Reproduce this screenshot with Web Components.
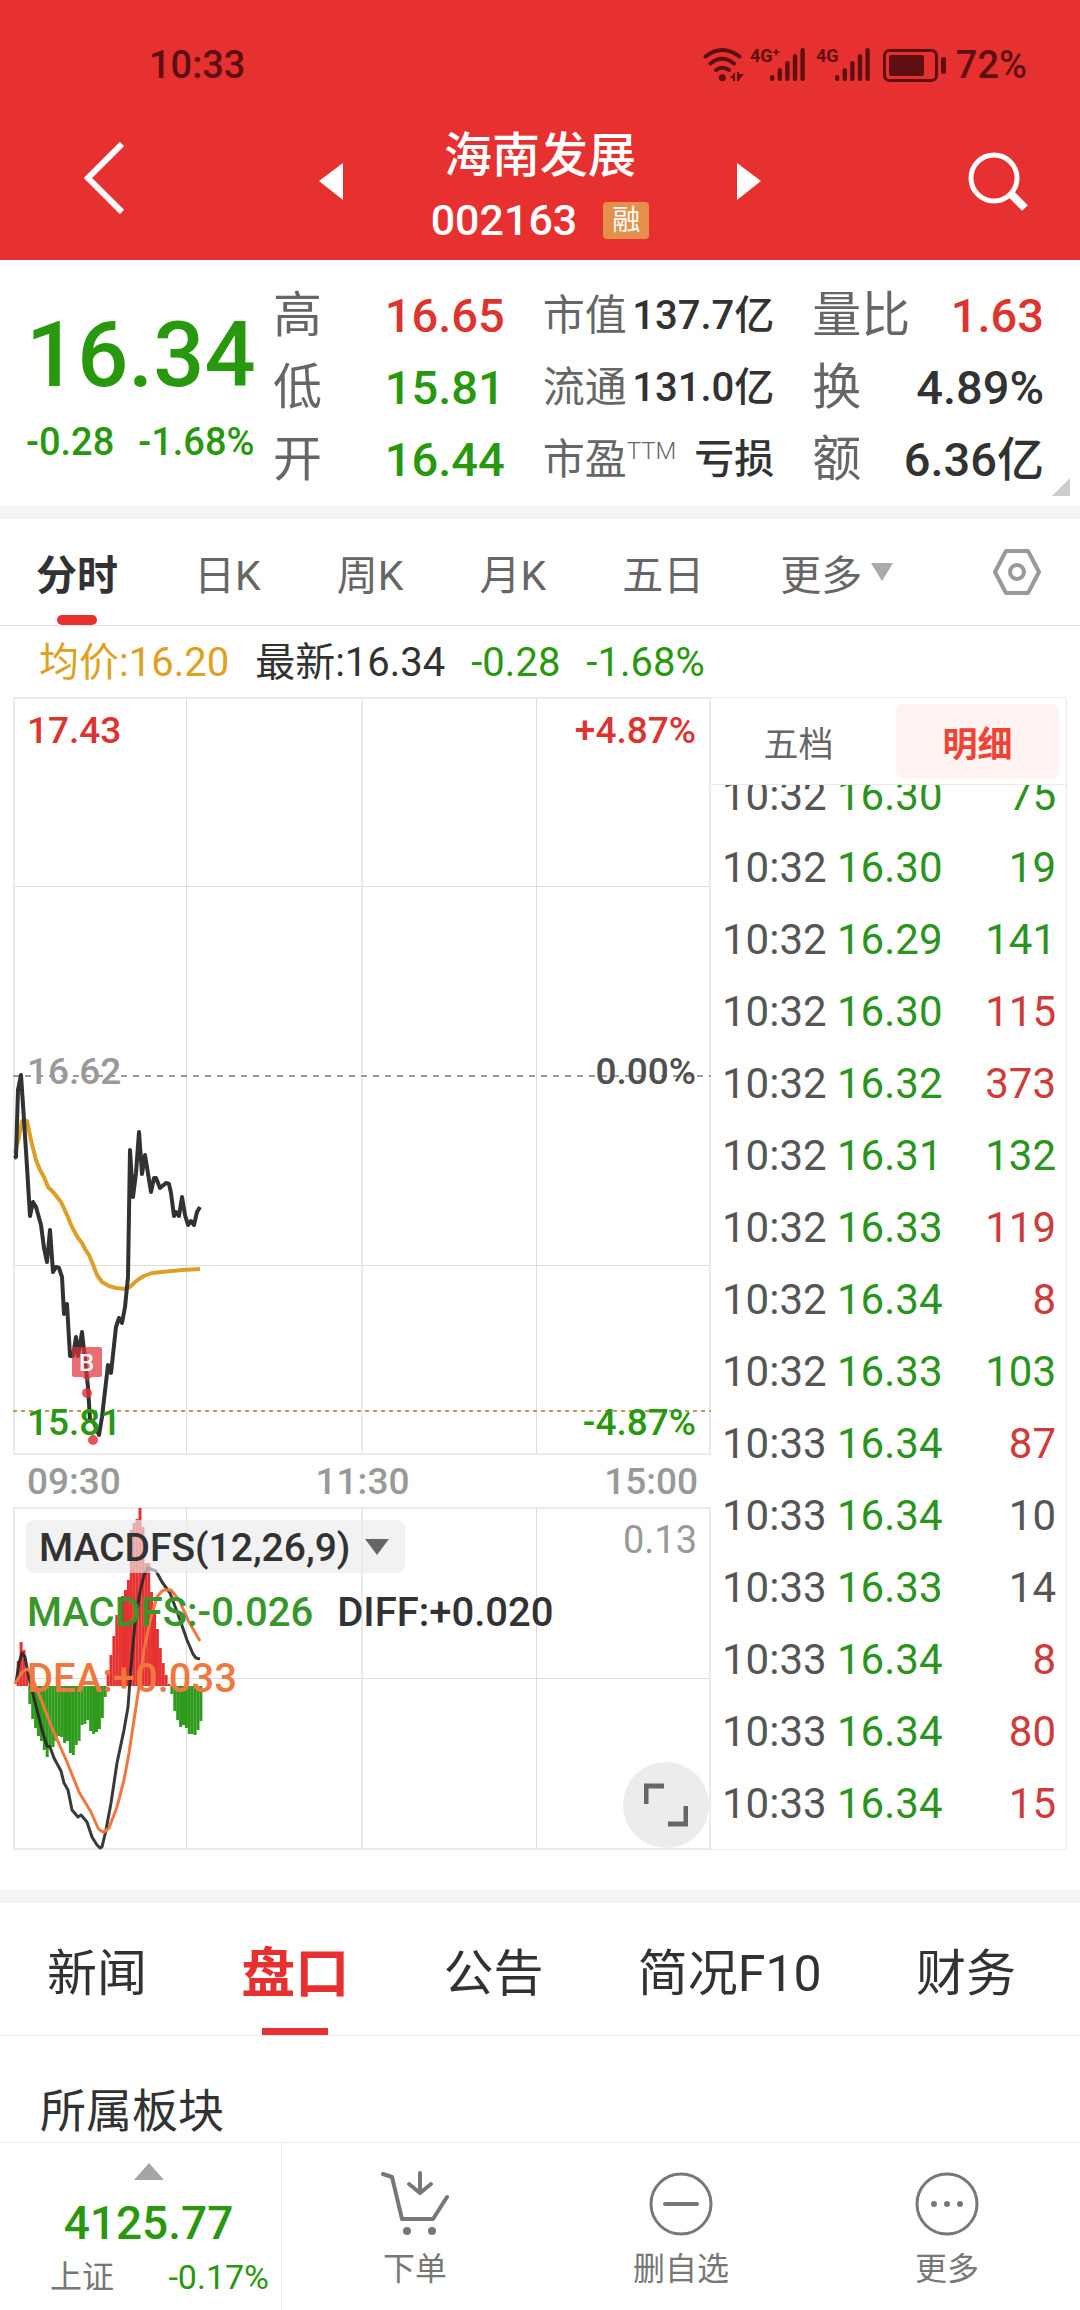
<!DOCTYPE html>
<html lang="zh-CN">
<head>
<meta charset="UTF-8">
<meta name="viewport" content="width=device-width, initial-scale=1">
<title>海南发展 002163</title>
<style>
    :root {
        --red: #e73030;
        --up: #dc3431;
        --down: #28980f;
        --text: #323232;
        --muted: #666;
        --faint: #999;
        --line: #ebebeb;
    }

    body {
        margin: 0;
        background: #fff;
        color: var(--text);
        font-family: Roboto, "Noto Sans CJK SC", sans-serif;
    }
</style>
</head>
<body>
<stock-page>
    <status-bar time="10:33" battery="72%"></status-bar>
    <stock-header code="002163" tag="融">海南发展</stock-header>
    <quote-panel></quote-panel>
    <period-tabs></period-tabs>
    <chart-area>
        <price-chart></price-chart>
        <macd-chart></macd-chart>
        <tick-panel slot="side"></tick-panel>
    </chart-area>
    <info-tabs></info-tabs>
    <section-title>所属板块</section-title>
    <bottom-bar slot="footer"></bottom-bar>
</stock-page>

<script>
class StockPage extends HTMLElement {
    connectedCallback() {
        this.attachShadow({ mode: 'open' });
        this.shadowRoot.innerHTML = `
            <style>
                :host {
                    display: flex;
                    flex-direction: column;
                    min-height: 100vh;
                }
                main { flex: 1; }
            </style>
            <main><slot></slot></main>
            <slot name="footer"></slot>
        `;
    }
}

class StatusBar extends HTMLElement {
    connectedCallback() {
        this.attachShadow({ mode: 'open' });
        this.render();
    }

    bars(x) {
        const tops = [28, 21, 14, 7, 1];
        return tops.map((top, i) =>
            `<rect x="${x + i * 7.6}" y="${top}" width="4.4" height="${34 - top}" rx="2.2"/>`
        ).join('');
    }

    render() {
        this.shadowRoot.innerHTML = `
            <style>
                :host {
                    display: flex;
                    align-items: center;
                    justify-content: space-between;
                    box-sizing: border-box;
                    height: 126px;
                    padding: 3px 53px 0 149px;
                    background: var(--red);
                    color: #5e1010;
                    font-size: 38px;
                    font-weight: 500;
                }
                .right {
                    display: flex;
                    align-items: center;
                    gap: 9px;
                }
                svg { display: block; overflow: visible; fill: currentColor; }
                .stroke { fill: none; stroke: currentColor; stroke-linecap: round; }
                text { font-size: 18px; font-weight: 700; }
                .plus { font-size: 13px; }
            </style>
            <span>${this.getAttribute('time')}</span>
            <div class="right">
                <svg width="244" height="36" viewBox="0 0 244 36" aria-hidden="true">
                    <g class="stroke" stroke-width="4">
                        <path d="M2.500 9.500Q19 -3.500 36.500 9.500"/>
                        <path d="M7.500 16.500Q19 7 31 16.500"/>
                        <path d="M13 23Q19 18.500 26 23"/>
                    </g>
                    <circle cx="19.300" cy="30.700" r="3.500"/>
                    <path d="M27 31l5-6v9h-2v-3zM34 25h2v2h5l-5 6v1h-2z"/>
                    <text x="47" y="15">4G<tspan class="plus" dy="-5">+</tspan></text>
                    ${this.bars(67)}
                    <text x="113" y="15">4G</text>
                    ${this.bars(132)}
                    <rect class="stroke" x="181.500" y="3.500" width="52" height="30" rx="5" stroke-width="3"/>
                    <rect x="186" y="8" width="35" height="21" rx="2"/>
                    <rect x="238" y="10" width="5" height="17" rx="2"/>
                </svg>
                <span>${this.getAttribute('battery')}</span>
            </div>
        `;
    }
}

class StockHeader extends HTMLElement {
    connectedCallback() {
        this.attachShadow({ mode: 'open' });
        this.shadowRoot.innerHTML = `
            <style>
                :host {
                    display: grid;
                    grid-template-columns: 1fr auto 1fr;
                    align-items: start;
                    height: 134px;
                    padding: 0 52px;
                    background: var(--red);
                    color: #fff;
                }
                button {
                    display: flex;
                    align-items: center;
                    height: 110px;
                    padding: 0;
                    border: 0;
                    background: none;
                    color: inherit;
                }
                .back {
                    justify-self: start;
                    height: 104px;
                    padding-left: 32px;
                }
                .search { justify-self: end; }
                .middle { display: flex; gap: 88px; }
                .name {
                    margin: 0;
                    text-align: center;
                    font-size: 48px;
                    font-weight: 500;
                    line-height: 60px;
                }
                .code {
                    display: flex;
                    align-items: center;
                    gap: 26px;
                    font-size: 43px;
                    font-weight: 500;
                    line-height: 68px;
                }
                .tag {
                    padding: 0 9px;
                    border-radius: 4px;
                    background: #e58f4a;
                    font-size: 28px;
                    font-weight: 400;
                    line-height: 37px;
                }
            </style>
            <button class="back" aria-label="返回">
                <svg width="40" height="72" viewBox="0 0 40 72" fill="none" stroke="#fff" stroke-width="6"><path d="M38 2L4 36L38 70"/></svg>
            </button>
            <div class="middle">
                <button aria-label="上一只">
                    <svg width="24" height="37" viewBox="0 0 24 37" fill="#fff"><path d="M24 0v37L0 18z"/></svg>
                </button>
                <div>
                    <h1 class="name"><slot></slot></h1>
                    <div class="code">${this.getAttribute('code')}<span class="tag">${this.getAttribute('tag')}</span></div>
                </div>
                <button aria-label="下一只">
                    <svg width="24" height="37" viewBox="0 0 24 37" fill="#fff"><path d="M0 0v37l24-19z"/></svg>
                </button>
            </div>
            <button class="search" aria-label="搜索">
                <svg width="60" height="60" viewBox="0 0 60 60" fill="none" stroke="#fff">
                    <circle cx="26" cy="27" r="23" stroke-width="5"/>
                    <path d="M43 43L57 57" stroke-width="8"/>
                </svg>
            </button>
        `;
    }
}

class QuotePanel extends HTMLElement {
    connectedCallback() {
        this.attachShadow({ mode: 'open' });
        this.columns = [
            [['高', '16.65', 'up'], ['低', '15.81', 'down'], ['开', '16.44', 'down']],
            [['市值', '137.7亿'], ['流通', '131.0亿'], ['市盈<sup>TTM</sup>', '亏损']],
            [['量比', '1.63', 'up'], ['换', '4.89%'], ['额', '6.36亿']]
        ];
        this.render();
    }

    render() {
        const lists = this.columns.map(rows => `<dl>${rows.map(([label, value, tone = '']) =>
            `<div><dt>${label}</dt><dd class="${tone}">${value}</dd></div>`).join('')}</dl>`).join('');

        this.shadowRoot.innerHTML = `
            <style>
                :host {
                    display: flex;
                    position: relative;
                    padding: 20px 36px 10px 26px;
                    border-bottom: 13px solid #f4f4f4;
                }
                .price {
                    flex: none;
                    width: 247px;
                    color: var(--down);
                    font-weight: 500;
                }
                .last {
                    margin-top: 30px;
                    font-size: 90px;
                    line-height: 92px;
                }
                .change {
                    display: flex;
                    gap: 24px;
                    margin-top: 20px;
                    font-size: 38px;
                    line-height: 40px;
                }
                .grid {
                    display: grid;
                    flex: 1;
                    grid-template-columns: repeat(3, 1fr);
                    gap: 38px;
                }
                dl { margin: 0; font-size: 47px; line-height: 72px; }
                dl > div {
                    display: flex;
                    justify-content: space-between;
                    white-space: nowrap;
                }
                dt { color: var(--muted); font-size: 49px; }
                dd { margin: 0; font-weight: 500; }
                dl:nth-child(2) { font-size: 40px; }
                dl:nth-child(2) dt { font-size: 42px; }
                sup { font-size: 24px; line-height: 24px; font-weight: 300; }
                .up { color: var(--up); }
                .down { color: var(--down); }
                .corner {
                    position: absolute;
                    right: 10px;
                    bottom: 10px;
                    fill: #ccc;
                }
            </style>
            <div class="price">
                <div class="last">16.34</div>
                <div class="change"><span>-0.28</span><span>-1.68%</span></div>
            </div>
            <div class="grid">${lists}</div>
            <svg class="corner" width="18" height="18"><path d="M18 0v18H0z"/></svg>
        `;
    }
}

class PeriodTabs extends HTMLElement {
    connectedCallback() {
        this.attachShadow({ mode: 'open' });
        const tabs = ['日K', '周K', '月K', '五日'];
        this.shadowRoot.innerHTML = `
            <style>
                :host { display: block; }
                nav {
                    display: flex;
                    gap: 76px;
                    height: 106px;
                    padding: 0 39px 0 36px;
                    border-bottom: 1px solid #e2e2e2;
                }
                button {
                    display: flex;
                    position: relative;
                    align-items: center;
                    gap: 9px;
                    padding: 0;
                    border: 0;
                    background: none;
                    color: var(--muted);
                    font: 400 41px Roboto, "Noto Sans CJK SC", sans-serif;
                    white-space: nowrap;
                }
                .active { color: var(--text); font-weight: 700; }
                .active::after {
                    content: "";
                    position: absolute;
                    left: 21px;
                    bottom: 0;
                    width: 40px;
                    height: 10px;
                    border-radius: 5px;
                    background: var(--red);
                }
                .settings { margin-left: auto; }
                .info {
                    display: flex;
                    gap: 26px;
                    padding: 3px 0 0 39px;
                    font-size: 40px;
                    line-height: 68px;
                }
                .avg { color: #e0a020; }
                .down { color: var(--down); }
            </style>
            <nav>
                <button class="active">分时</button>
                ${tabs.map(tab => `<button>${tab}</button>`).join('')}
                <button>更多<svg width="22" height="18" fill="#aaa"><path d="M0 0h22L11 18z"/></svg></button>
                <button class="settings" aria-label="设置">
                    <svg width="48" height="48" viewBox="0 0 48 48" fill="none" stroke="#999" stroke-width="4" stroke-linejoin="round">
                        <path d="M13 3h22l11 21-11 21H13L2 24z"/>
                        <circle cx="24" cy="24" r="7"/>
                    </svg>
                </button>
            </nav>
            <div class="info">
                <span class="avg">均价:16.20</span>
                <span>最新:16.34</span>
                <span class="down">-0.28</span>
                <span class="down">-1.68%</span>
            </div>
        `;
    }
}

class ChartArea extends HTMLElement {
    connectedCallback() {
        this.attachShadow({ mode: 'open' });
        this.shadowRoot.innerHTML = `
            <style>
                :host {
                    display: grid;
                    grid-template-columns: 698fr 356fr;
                    padding: 0 13px 40px;
                    border-bottom: 13px solid #f4f4f4;
                }
            </style>
            <div><slot></slot></div>
            <slot name="side"></slot>
        `;
    }
}

class PriceChart extends HTMLElement {
    connectedCallback() {
        this.attachShadow({ mode: 'open' });
        this.price = '1,461 3,460 5,393 8,378 11,423 14,470 17,519 20,505 23,510 28,528 31,551 34,565 37,533 40,575 43,570 46,571 49,580 51,617 54,607 57,659 60,659 63,640 65,659 69,635 72,663 75,690 77,723 81,726 86,738 89,720 95,668 98,676 103,630 106,621 109,626 112,610 115,580 116,516 117,453 120,500 123,476 126,435 129,477 132,458 138,495 141,481 143,481 147,491 153,486 156,487 158,496 161,519 163,515 166,519 169,500 172,518 175,528 178,524 181,528 184,515 187,510';
        this.average = '2,456 6,440 9,424 14,424 18,443 23,463 27,473 31,480 35,490 41,496 48,505 54,518 59,530 65,541 69,546 72,552 76,558 81,570 84,578 89,585 96,589 103,591 113,592 118,589 122,585 126,582 131,579 139,576 149,575 159,574 169,573 187,572';
        this.render();
    }

    render() {
        this.shadowRoot.innerHTML = `
            <style>
                :host { display: block; font-size: 37px; font-weight: 500; }
                .plot { position: relative; height: 758px; }
                svg { display: block; width: 100%; height: 100%; }
                svg text { font-size: 24px; fill: #fff; }
                .plot span { position: absolute; line-height: 40px; }
                .plot span:nth-of-type(odd) { left: 14px; }
                .plot span:nth-of-type(even) { right: 15px; }
                .top { top: 14px; color: var(--up); }
                .mid { top: 355px; color: #505050; }
                .bottom { bottom: 12px; color: var(--down); }
                .grey { color: var(--faint); }
                /* trade marker that lies over the price label */
                .dot {
                    position: absolute;
                    left: 75px;
                    bottom: 10px;
                    width: 10px;
                    height: 10px;
                    border-radius: 50%;
                    background: #e45558;
                }
                .axis {
                    display: flex;
                    justify-content: space-between;
                    padding: 2px 13px 0 14px;
                    color: var(--faint);
                    line-height: 50px;
                }
            </style>
            <div class="plot">
                <svg viewBox="0 0 698 758" preserveAspectRatio="none" fill="none">
                    <g stroke="#dcdcdc">
                        <path d="M173.500 0V758M523.500 0V758M0 189.500H698M0 568.500H698"/>
                        <path d="M349 0V758" stroke="#ebebeb" stroke-width="2"/>
                    </g>
                    <rect x="1" y="1" width="696" height="756" stroke="#ebebeb" stroke-width="2"/>
                    <path d="M0 379H698" stroke="#999" stroke-width="2" stroke-dasharray="6"/>
                    <path d="M0 714H698" stroke="#c8955a" stroke-width="2" stroke-dasharray="4"/>
                    <g stroke-width="4" stroke-linejoin="round">
                        <polyline points="${this.average}" stroke="#dca028"/>
                        <polyline points="${this.price}" stroke="#323232"/>
                    </g>
                    <g fill="#e03038">
                        <path d="M61 650h26a2 2 0 0 1 2 2v26a2 2 0 0 1-2 2h-8l-5 4-5-4h-8a2 2 0 0 1-2-2v-26a2 2 0 0 1 2-2z" opacity=".7"/>
                        <circle cx="74" cy="696" r="5" opacity=".8"/>
                    </g>
                    <text x="66" y="674">B</text>
                </svg>
                <span class="top">17.43</span>
                <span class="top">+4.87%</span>
                <span class="mid grey">16.62</span>
                <span class="mid">0.00%</span>
                <span class="bottom">15.81</span>
                <span class="bottom">-4.87%</span>
                <i class="dot"></i>
            </div>
            <div class="axis"><time>09:30</time><time>11:30</time><time>15:00</time></div>
        `;
    }
}

class MacdChart extends HTMLElement {
    connectedCallback() {
        this.attachShadow({ mode: 'open' });
        this.values = [
            25, 44, 36, 16, -18, -33, -42, -50, -55, -64, -71, -61, -61, -55, -50, -51,
            -57, -55, -67, -69, -59, -55, -39, -38, -34, -45, -48, -46, -43, -32, -11, 16,
            31, 50, 71, 88, 90, 96, 106, 156, 163, 167, 178, 159, 123, 123, 94, 74,
            57, 38, 23, 11, 2, -8, -25, -34, -41, -39, -42, -48, -48, -49, -44, -35
        ];
        this.diff = '3,176 6,156 9,146 12,150 15,166 19,183 24,203 29,223 34,239 37,240 41,251 48,264 51,276 55,283 59,303 65,310 68,308 74,315 79,330 84,338 87,341 89,340 93,323 98,296 104,256 111,223 115,200 118,160 122,116 127,85 131,68 135,61 143,64 149,75 157,86 166,110 174,133 180,147 183,151 187,152';
        this.dea = '2,177 9,165 14,162 17,165 21,175 29,195 39,221 54,255 66,285 78,305 85,321 88,324 91,325 96,321 104,300 111,273 116,246 121,213 126,180 131,143 138,110 144,90 148,85 151,83 158,83 166,93 176,115 187,134';
        this.render();
    }

    histogram() {
        const zero = 179;
        return this.values.map((v, i) => {
            const y = v > 0 ? zero - v : zero;
            return `<rect x="${(3.7 + i * 2.9).toFixed(1)}" y="${y}" width="3" height="${Math.abs(v)}" fill="${v > 0 ? '#e73030' : '#2f9b1c'}"/>`;
        }).join('');
    }

    render() {
        this.shadowRoot.innerHTML = `
            <style>
                :host {
                    display: block;
                    position: relative;
                    height: 343px;
                    font-size: 40px;
                    font-weight: 500;
                }
                svg { display: block; }
                .plot { width: 100%; height: 100%; }
                .overlay { position: absolute; inset: 0; padding: 13px 14px; }
                .head {
                    display: flex;
                    align-items: flex-start;
                    justify-content: space-between;
                    margin-left: -1px;
                }
                label {
                    display: flex;
                    align-items: center;
                    padding: 0 16px 0 13px;
                    border-radius: 8px;
                    background: rgba(235, 235, 235, .65);
                }
                select {
                    appearance: none;
                    height: 53px;
                    padding: 2px 0 0;
                    border: 0;
                    background: none;
                    color: var(--text);
                    font: 500 39px Roboto, sans-serif;
                }
                label svg { margin-left: 14px; }
                .max {
                    color: var(--faint);
                    font-size: 38px;
                    font-weight: 400;
                    line-height: 40px;
                }
                .legend {
                    display: flex;
                    flex-wrap: wrap;
                    column-gap: 24px;
                    margin-top: 7px;
                    line-height: 66px;
                }
                .macd { color: #38962a; }
                .dea { color: #f0783e; }
                .expand {
                    display: flex;
                    position: absolute;
                    right: 2px;
                    bottom: 2px;
                    align-items: center;
                    justify-content: center;
                    width: 86px;
                    height: 86px;
                    padding: 0;
                    border: 0;
                    border-radius: 50%;
                    background: #ececec;
                }
            </style>
            <svg class="plot" viewBox="0 0 698 343" preserveAspectRatio="none" fill="none">
                <path d="M173.500 0V343M523.500 0V343M0 171.500H698" stroke="#dcdcdc"/>
                <path d="M349 0V343" stroke="#ebebeb" stroke-width="2"/>
                <rect x="1" y="1" width="696" height="341" stroke="#ebebeb" stroke-width="2"/>
                ${this.histogram()}
                <g stroke-width="3" stroke-linejoin="round">
                    <polyline points="${this.diff}" stroke="#282828" stroke-opacity=".92"/>
                    <polyline points="${this.dea}" stroke="#f0783e"/>
                </g>
            </svg>
            <div class="overlay">
                <div class="head">
                    <label>
                        <select aria-label="指标"><option>MACDFS(12,26,9)</option></select>
                        <svg width="24" height="16" fill="#666"><path d="M0 0h24L12 16z"/></svg>
                    </label>
                    <span class="max">0.13</span>
                </div>
                <div class="legend">
                    <span class="macd">MACDFS:-0.026</span>
                    <span>DIFF:+0.020</span>
                    <span class="dea">DEA:+0.033</span>
                </div>
            </div>
            <button class="expand" aria-label="全屏">
                <svg width="44" height="44" fill="none" stroke="#666" stroke-width="5"><path d="M2 21V3h18M42 23v18H24"/></svg>
            </button>
        `;
    }
}

class TickPanel extends HTMLElement {
    connectedCallback() {
        this.attachShadow({ mode: 'open' });
        this.ticks = [
            ['10:32', '16.30', 75, 'down'],
            ['10:32', '16.30', 19, 'down'],
            ['10:32', '16.29', 141, 'down'],
            ['10:32', '16.30', 115, 'up'],
            ['10:32', '16.32', 373, 'up'],
            ['10:32', '16.31', 132, 'down'],
            ['10:32', '16.33', 119, 'up'],
            ['10:32', '16.34', 8, 'up'],
            ['10:32', '16.33', 103, 'down'],
            ['10:33', '16.34', 87, 'up'],
            ['10:33', '16.34', 10, ''],
            ['10:33', '16.33', 14, ''],
            ['10:33', '16.34', 8, 'up'],
            ['10:33', '16.34', 80, 'up'],
            ['10:33', '16.34', 15, 'up']
        ];
        this.render();
    }

    render() {
        const rows = this.ticks.map(([time, price, volume, tone]) =>
            `<tr><td>${time}</td><td class="down">${price}</td><td class="${tone}">${volume}</td></tr>`).join('');

        this.shadowRoot.innerHTML = `
            <style>
                :host {
                    display: flex;
                    flex-direction: column;
                    contain: size;
                    border: 1px solid var(--line);
                    border-left: 0;
                }
                .tabs {
                    display: grid;
                    flex: none;
                    grid-template-columns: 175fr 163fr;
                    gap: 10px;
                    padding: 6px 7px 5px 0;
                    border-bottom: 1px solid var(--line);
                }
                button {
                    height: 75px;
                    padding: 0;
                    border: 0;
                    border-radius: 8px;
                    background: none;
                    color: var(--muted);
                    font: 400 35px Roboto, "Noto Sans CJK SC", sans-serif;
                }
                .active { background: #fff3f2; color: #f04336; font-weight: 700; }
                /* the list is pinned to its newest row */
                .list {
                    display: flex;
                    flex: 1;
                    flex-direction: column;
                    justify-content: flex-end;
                    min-height: 0;
                    padding: 0 10px 9px 11px;
                    overflow: hidden;
                }
                table {
                    flex: none;
                    width: 100%;
                    border-collapse: collapse;
                    color: #555;
                    font-size: 42px;
                }
                td { height: 72px; padding: 0; line-height: 72px; }
                td:first-child { width: 115px; }
                td:last-child { text-align: right; }
                .up { color: #cd3c3a; }
                .down { color: #2b9320; }
            </style>
            <div class="tabs"><button>五档</button><button class="active">明细</button></div>
            <div class="list"><table><tbody>${rows}</tbody></table></div>
        `;
    }
}

class InfoTabs extends HTMLElement {
    connectedCallback() {
        this.attachShadow({ mode: 'open' });
        const tabs = ['新闻', '盘口', '公告', '简况F10', '财务'];
        this.shadowRoot.innerHTML = `
            <style>
                :host {
                    display: flex;
                    justify-content: space-between;
                    height: 132px;
                    padding: 0 64px 0 47px;
                    border-bottom: 1px solid var(--line);
                }
                button {
                    position: relative;
                    padding: 0;
                    border: 0;
                    background: none;
                    color: var(--text);
                    font: 400 50px Roboto, "Noto Sans CJK SC", sans-serif;
                    white-space: nowrap;
                }
                .active { color: var(--red); font-size: 54px; font-weight: 700; }
                .active::after {
                    content: "";
                    position: absolute;
                    left: 21px;
                    right: 21px;
                    bottom: 0;
                    height: 7px;
                    background: var(--red);
                }
            </style>
            ${tabs.map(tab => `<button class="${tab === '盘口' ? 'active' : ''}">${tab}</button>`).join('')}
        `;
    }
}

class SectionTitle extends HTMLElement {
    connectedCallback() {
        this.attachShadow({ mode: 'open' });
        this.shadowRoot.innerHTML = `
            <style>
                :host { display: block; padding: 45px 40px 0; }
                h2 { margin: 0; font-size: 46px; font-weight: 400; line-height: 60px; }
            </style>
            <h2><slot></slot></h2>
        `;
    }
}

class BottomBar extends HTMLElement {
    connectedCallback() {
        this.attachShadow({ mode: 'open' });
        this.shadowRoot.innerHTML = `
            <style>
                :host {
                    display: grid;
                    grid-template-columns: 282fr 266fr 266fr 266fr;
                    height: 167px;
                    border-top: 1px solid var(--line);
                    color: #777;
                    font-size: 32px;
                    line-height: 36px;
                }
                svg { display: block; }
                .index {
                    display: flex;
                    flex-direction: column;
                    align-items: center;
                    padding: 20px 12px 0 28px;
                    border-right: 1px solid var(--line);
                }
                .value {
                    margin-top: 16px;
                    color: var(--down);
                    font-size: 46px;
                    font-weight: 500;
                    line-height: 54px;
                }
                .row {
                    display: flex;
                    align-self: stretch;
                    justify-content: space-between;
                    margin-top: 9px;
                    padding-left: 22px;
                }
                .row b { color: var(--down); font-size: 34px; font-weight: 400; }
                button {
                    display: flex;
                    flex-direction: column;
                    align-items: center;
                    gap: 14px;
                    padding: 28px 0 0;
                    border: 0;
                    background: none;
                    color: inherit;
                    font: 400 32px/36px Roboto, "Noto Sans CJK SC", sans-serif;
                }
                .line { fill: none; stroke: #777; stroke-width: 4; stroke-linecap: round; stroke-linejoin: round; }
                .thin { stroke-width: 3; }
                .dot { fill: #777; stroke: none; }
            </style>
            <div class="index">
                <svg width="30" height="17" fill="#a5a5a5"><path d="M15 0l15 17H0z"/></svg>
                <div class="value">4125.77</div>
                <div class="row"><span>上证</span><b>-0.17%</b></div>
            </div>
            <button>
                <svg class="line" width="68" height="66" viewBox="0 0 68 66">
                    <path d="M2 3L11 6L21 48H52L66 26"/>
                    <path d="M39 2V22M28 13L39 22L50 13"/>
                    <circle class="dot" cx="26" cy="60" r="4"/>
                    <circle class="dot" cx="51" cy="60" r="4"/>
                </svg>
                下单
            </button>
            <button>
                <svg class="line" width="66" height="66" viewBox="0 0 66 66">
                    <circle class="thin" cx="33" cy="33" r="30"/>
                    <path d="M17 33H49"/>
                </svg>
                删自选
            </button>
            <button>
                <svg class="line" width="66" height="66" viewBox="0 0 66 66">
                    <circle class="thin" cx="33" cy="33" r="30"/>
                    <circle class="dot" cx="20" cy="33" r="3"/>
                    <circle class="dot" cx="33" cy="33" r="3"/>
                    <circle class="dot" cx="46" cy="33" r="3"/>
                </svg>
                更多
            </button>
        `;
    }
}

customElements.define('stock-page', StockPage);
customElements.define('status-bar', StatusBar);
customElements.define('stock-header', StockHeader);
customElements.define('quote-panel', QuotePanel);
customElements.define('period-tabs', PeriodTabs);
customElements.define('chart-area', ChartArea);
customElements.define('price-chart', PriceChart);
customElements.define('macd-chart', MacdChart);
customElements.define('tick-panel', TickPanel);
customElements.define('info-tabs', InfoTabs);
customElements.define('section-title', SectionTitle);
customElements.define('bottom-bar', BottomBar);
</script>
</body>
</html>
